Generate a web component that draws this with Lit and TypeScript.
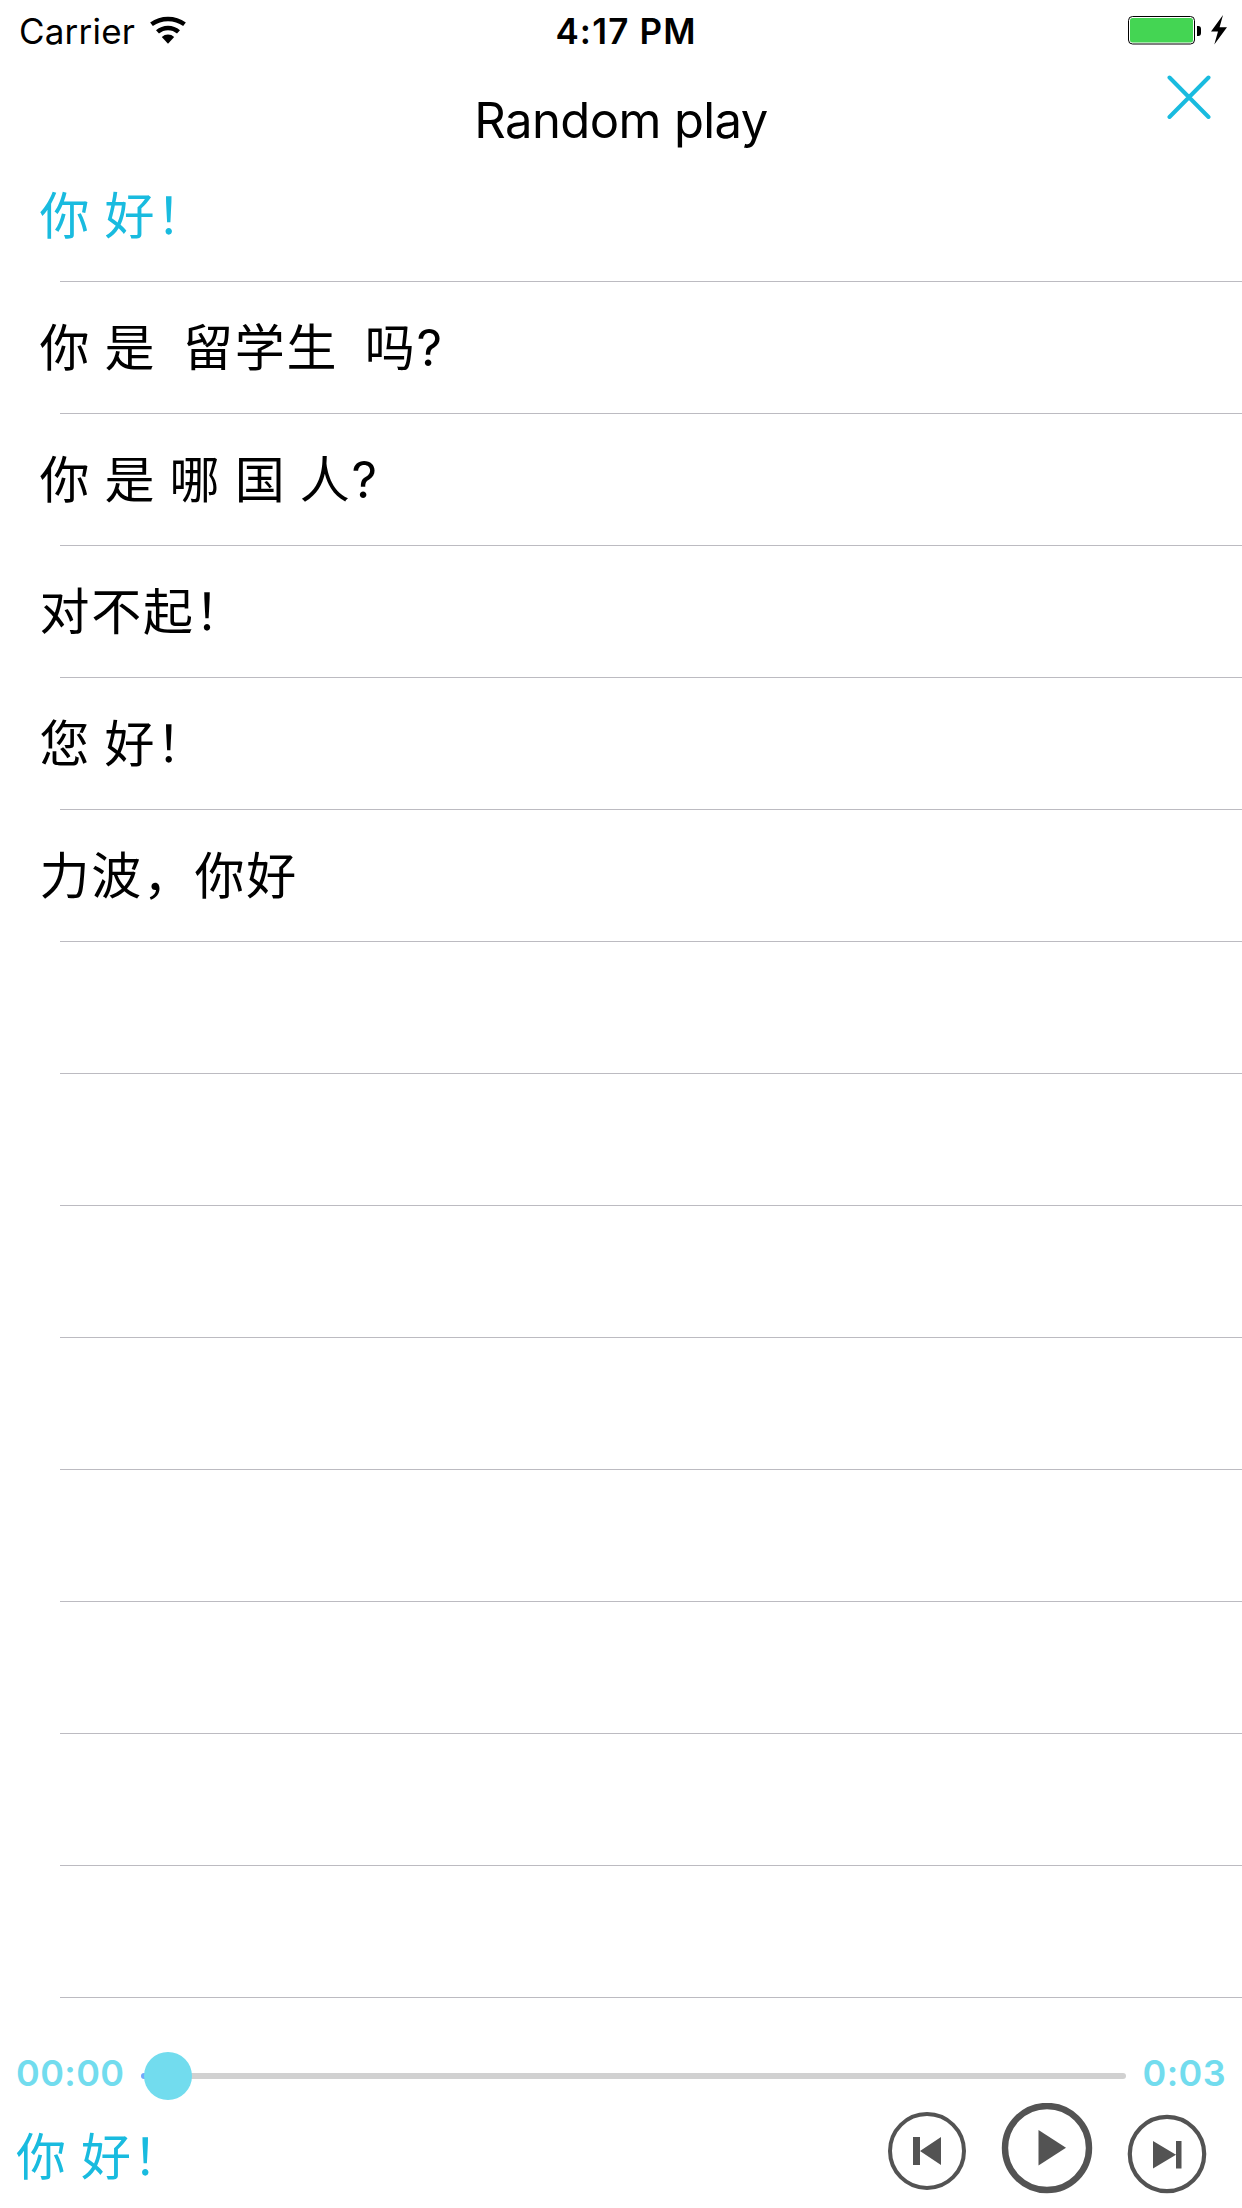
import { LitElement, html, css, nothing } from "lit";
import { customElement, property, state } from "lit/decorators.js";

interface Row {
  text: string;
}

const ROWS: Row[] = [
  { text: "你 好！" },
  { text: "你 是  留学生  吗?" },
  { text: "你 是 哪 国 人?" },
  { text: "对不起！" },
  { text: "您 好！" },
  { text: "力波，你好" },
];

const ROW_COUNT = 14;

@customElement("status-bar")
class StatusBar extends LitElement {
  static styles = css`
    :host {
      display: grid;
      grid-template-columns: 1fr auto 1fr;
      align-items: center;
      height: 60px;
      padding: 0 14px 0 19px;
      box-sizing: border-box;
      color: #000;
      font-size: 35px;
      line-height: 60px;
    }
    .left {
      display: flex;
      align-items: center;
    }
    .carrier {
      padding-top: 1px;
      letter-spacing: 0.2px;
    }
    .wifi {
      margin: 0 0 2px 14px;
      width: 38px;
      height: 28px;
    }
    .time {
      font-weight: 600;
      padding: 1px 0 0 5px;
      letter-spacing: 1.15px;
    }
    .right {
      display: flex;
      justify-content: flex-end;
      align-items: center;
    }
    .battery {
      width: 100px;
      height: 30px;
      margin-bottom: 2px;
    }
  `;

  render() {
    return html`
      <div class="left">
        <span class="carrier">Carrier</span>
        <svg class="wifi" viewBox="0 0 38 28">
          <path d="M2.500 8.300A27.900 27.900 0 0 1 35.500 8.300" fill="none" stroke="#000" stroke-width="4.500" />
          <path d="M8.500 15.900A15.900 15.900 0 0 1 29.500 15.900" fill="none" stroke="#000" stroke-width="4.500" />
          <path d="M12.800 20.900A9.200 9.200 0 0 1 25.200 20.900L19 27.700Z" />
        </svg>
      </div>
      <span class="time">4:17 PM</span>
      <div class="right">
        <svg class="battery" viewBox="0 0 100 30">
          <rect x="0.5" y="1.5" width="66" height="27.5" rx="4" fill="#fff" stroke="#000" />
          <rect x="2" y="3" width="63" height="24.5" rx="2.5" fill="#44d553" />
          <path d="M69 11h1.2a3 3 0 0 1 2.8 3v4a3 3 0 0 1-2.8 3H69z" />
          <path d="M95 0L83 16.6h7L86.300 29.500L99 12.200h-7.400z" />
        </svg>
      </div>
    `;
  }
}

@customElement("phrase-row")
class PhraseRow extends LitElement {
  @property() text = "";
  @property({ type: Boolean, reflect: true }) active = false;

  static styles = css`
    :host {
      display: block;
      height: 132px;
    }
    .cell {
      display: flex;
      flex-direction: column;
      height: 132px;
      color: #000;
    }
    :host([active]) .cell {
      color: #19bbdf;
    }
    .text {
      flex: 1;
      padding-left: 39.5px;
      font-size: 50px;
      line-height: 133px;
      height: 131px;
      letter-spacing: 1.7px;
      word-spacing: -2.4px;
      white-space: pre;
    }
    .rule {
      height: 1px;
      margin-left: 60px;
      background: #bcbbc1;
    }
  `;

  render() {
    return html`
      <div class="cell">
        <div class="text">${this.text || nothing}</div>
        <div class="rule"></div>
      </div>
    `;
  }
}

@customElement("player-bar")
class PlayerBar extends LitElement {
  @property() text = "";

  static styles = css`
    :host {
      display: block;
      height: 210px;
    }
    .progress {
      display: flex;
      align-items: center;
      padding: 38px 16px 0 16px;
      height: 76px;
    }
    .stamp {
      font-size: 36px;
      font-weight: 600;
      line-height: 74px;
      height: 76px;
      letter-spacing: 0.4px;
      color: #72dcee;
    }
    .elapsed {
      width: 125px;
    }
    .total {
      margin-left: auto;
    }
    .track {
      flex: none;
      height: 50px;
      width: 985px;
      margin-top: 3px;
    }
    .controls {
      display: flex;
      align-items: flex-start;
      padding: 0 34px 0 16px;
      margin-top: -5px;
    }
    .now {
      flex: 1;
      font-size: 50px;
      line-height: 100px;
      letter-spacing: 1.7px;
      word-spacing: -2.4px;
      white-space: pre;
      color: #19bbdf;
    }
    .buttons {
      width: 320px;
      height: 92px;
      margin-top: -4px;
    }
  `;

  render() {
    return html`
      <div class="progress">
        <span class="stamp elapsed">00:00</span>
        <svg class="track" viewBox="0 0 985 50">
          <rect x="0" y="22" width="24" height="6" rx="3" fill="#72a9fb" />
          <rect x="20" y="22" width="965" height="6" rx="3" fill="#d1d1d1" />
          <circle cx="27" cy="25" r="24" fill="#72dcee" />
        </svg>
        <span class="stamp total">0:03</span>
      </div>
      <div class="controls">
        <div class="now">${this.text}</div>
        <svg class="buttons" viewBox="0 0 320 92">
          <g fill="none" stroke="#535353">
            <circle cx="39" cy="48" r="37" stroke-width="4" />
            <circle cx="159" cy="45" r="42" stroke-width="6.400" />
            <circle cx="279" cy="51" r="37.200" stroke-width="4.200" />
          </g>
          <g fill="#535353">
            <path d="M25 34h7v28h-7zM53 34v28L32 48z" />
            <path d="M150.500 27v35.500L178 44.700z" />
            <path d="M265 38v27.500L288 51.700zM288 38h5.500v27.500H288z" />
          </g>
        </svg>
      </div>
    `;
  }
}

@customElement("app-root")
class AppRoot extends LitElement {
  @state() private current = 0;

  static styles = css`
    :host {
      display: flex;
      flex-direction: column;
      width: 1242px;
      height: 2208px;
      overflow: hidden;
      background: #fff;
      font-family: Inter, "Noto Sans CJK SC", sans-serif;
    }
    .header {
      display: grid;
      grid-template-columns: 1fr auto 1fr;
      height: 90px;
      padding-right: 31px;
    }
    .title {
      grid-column: 2;
      margin-left: 31px;
      font-size: 49px;
      line-height: 60px;
      padding-top: 31px;
      letter-spacing: -0.6px;
      color: #000;
    }
    .close {
      justify-self: end;
      width: 44px;
      height: 44px;
      margin-top: 15px;
    }
    .list {
      display: flex;
      flex-direction: column;
    }
  `;

  render() {
    return html`
      <status-bar></status-bar>
      <div class="header">
        <div class="title">Random play</div>
        <svg class="close" viewBox="0 0 44 44">
          <path d="M2.500 2.500L41.500 42M41.500 2.500L2.500 42" stroke="#19bbdf" stroke-width="4" stroke-linecap="round" />
        </svg>
      </div>
      <div class="list">
        ${Array.from({ length: ROW_COUNT }, (_, i) => html`
          <phrase-row
            .text=${ROWS[i]?.text ?? ""}
            ?active=${i === this.current}
            @click=${() => { if (ROWS[i]) this.current = i; }}
          ></phrase-row>
        `)}
      </div>
      <player-bar .text=${ROWS[this.current].text}></player-bar>
    `;
  }
}
